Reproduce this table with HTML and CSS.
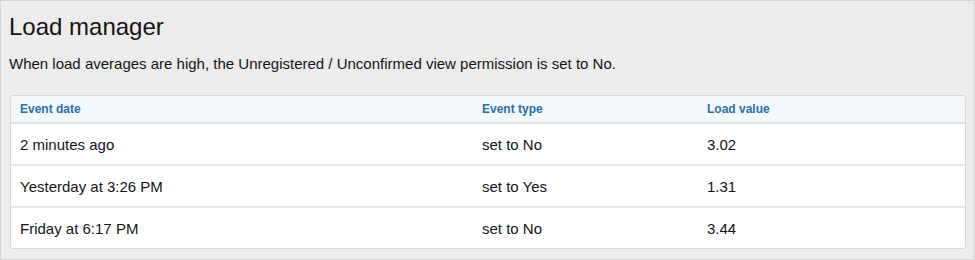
FILE: index.html
```html
<!DOCTYPE html>
<html lang="en">
<head>
  <meta charset="UTF-8">
  <title>Load manager</title>
  <link rel="stylesheet" href="styles.css">
</head>
<body>
  <div class="page">
    <h1 class="title">Load manager</h1>
    <p class="intro">When load averages are high, the Unregistered / Unconfirmed view permission is set to No.</p>
    <div class="block">
      <table class="data">
        <thead>
          <tr>
            <th class="col-date">Event date</th>
            <th class="col-type">Event type</th>
            <th>Load value</th>
          </tr>
        </thead>
        <tbody>
          <tr>
            <td>2 minutes ago</td>
            <td>set to No</td>
            <td>3.02</td>
          </tr>
          <tr>
            <td>Yesterday at 3:26 PM</td>
            <td>set to Yes</td>
            <td>1.31</td>
          </tr>
          <tr>
            <td>Friday at 6:17 PM</td>
            <td>set to No</td>
            <td>3.44</td>
          </tr>
        </tbody>
      </table>
    </div>
  </div>
</body>
</html>
```

FILE: styles.css
```css
html, body {
  margin: 0;
  padding: 0;
}

body {
  font-family: "Liberation Sans", Arial, sans-serif;
  color: #141414;
}

.page {
  box-sizing: border-box;
  width: 975px;
  height: 260px;
  padding: 11px 8px 0 8px;
  background: #ececec;
  border: 1px solid #d4d4d4;
}

.title {
  margin: 0;
  font-size: 24px;
  font-weight: normal;
  line-height: 30px;
}

.intro {
  margin: 12px 0 0 0;
  font-size: 15px;
  line-height: 20px;
}

/*===============================
Event table
=============*/

.block {
  margin-top: 21px;
  margin-left: 1px;
  background: #fff;
  border: 1px solid #d8d8d8;
  border-radius: 3px;
  overflow: hidden;
}

.data {
  width: 100%;
  border-collapse: collapse;
}

.data th {
  text-align: left;
  font-size: 12px;
  font-weight: bold;
  color: #2a6fa8;
  background: #f3f8fc;
  height: 26px;
  padding: 0 9px;
  border-bottom: 2px solid #dfe3e6;
}

.data td {
  font-size: 15px;
  height: 40px;
  padding: 0 9px;
  border-bottom: 2px solid #e6e6e6;
}

.data tbody tr:last-child td {
  border-bottom: none;
}

.col-date {
  width: 444px;
}

.col-type {
  width: 207px;
}
```
